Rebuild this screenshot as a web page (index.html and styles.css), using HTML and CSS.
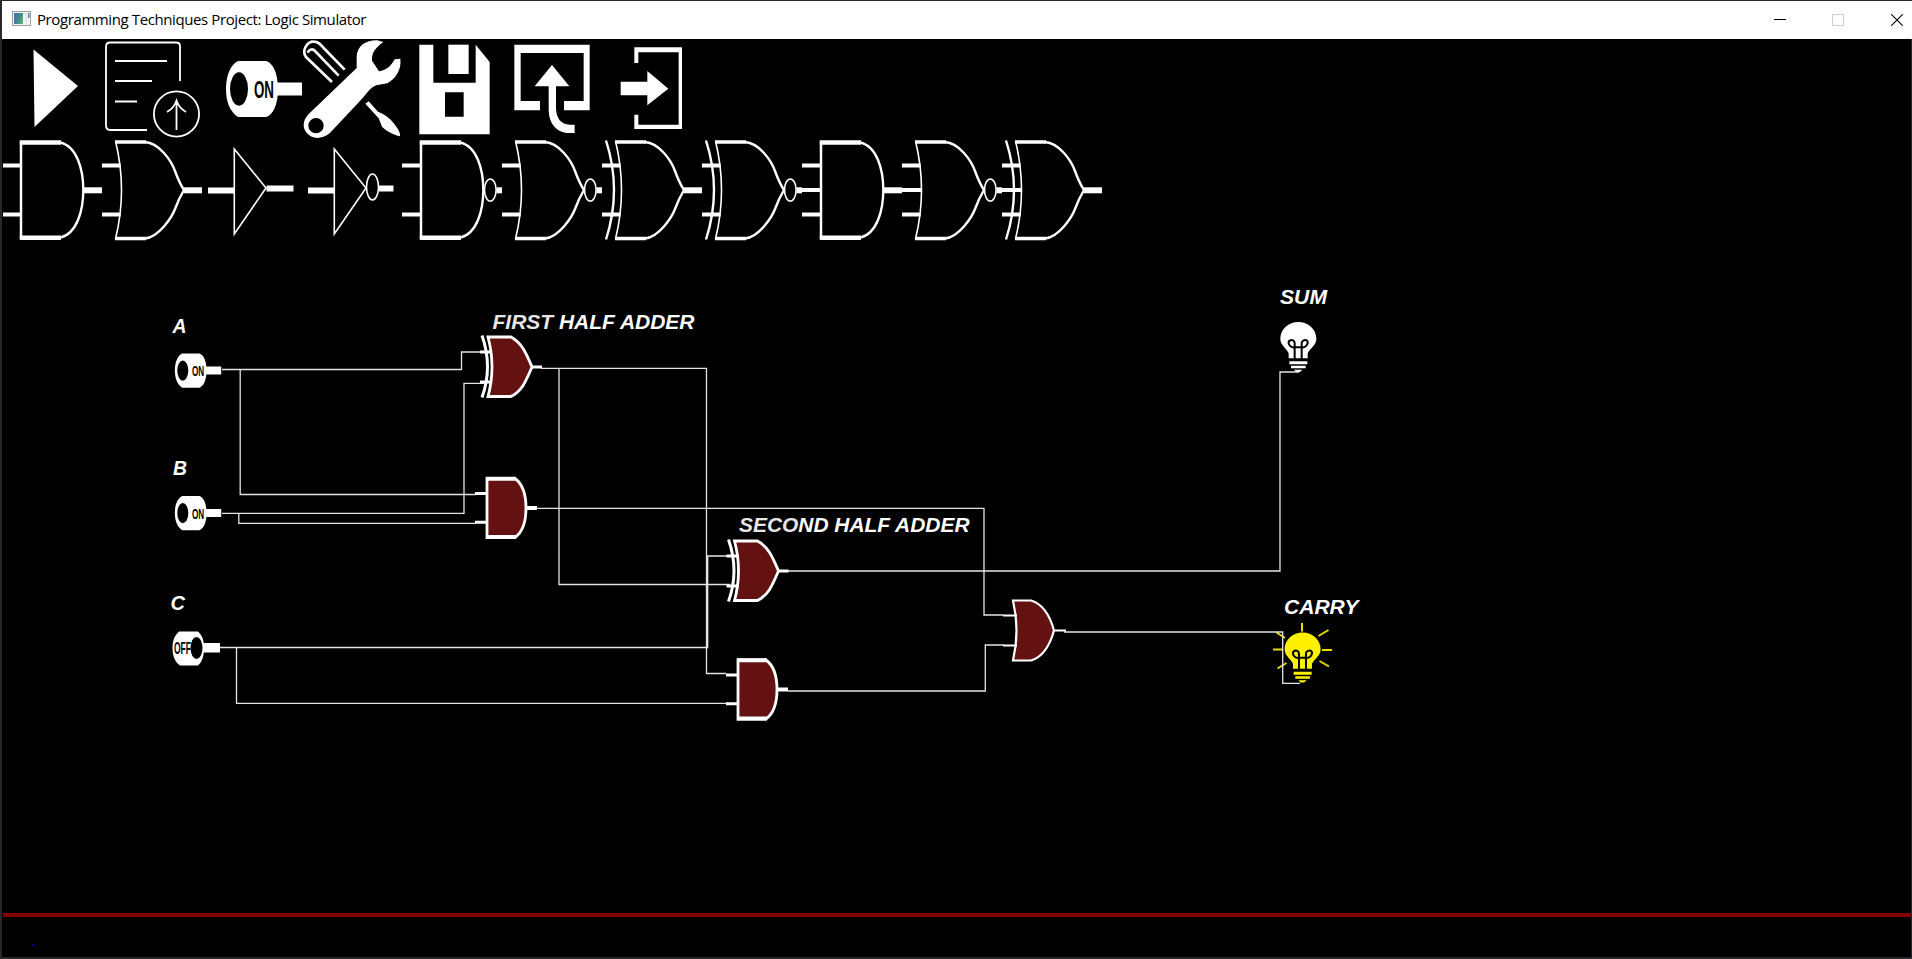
FILE: index.html
```html
<!DOCTYPE html>
<html lang="en">
<head>
<meta charset="utf-8">
<title>Programming Techniques Project: Logic Simulator</title>
<link rel="stylesheet" href="styles.css">
</head>
<body>
<svg class="defs" aria-hidden="true">
  <defs>
    <g id="and-body"><path class="mid" d="M58 2.400C75 6 81.300 30 81.300 50S75 94 58 97.600"/><path class="thick" d="M17.800 2.500H59M17.800 97.700H59"/><path class="thin" d="M19 1V99"/></g>
    <g id="or-body"><path class="mid" d="M43 2C57 3 69 20 73 31S80 47 82 50C79 55 76 61 73 69S57 97 43 98.500"/><path class="top" d="M13 2H44M13 98.500H44"/><path class="hair" d="M13.500 1Q25.500 50 13.500 99"/></g>
    <path id="xor-arc" class="mid" d="M4 .5Q20 50 4 99.500"/>
    <path id="in-and" class="pin" d="M0 25.500H18M0 74.500H18"/>
    <path id="in-or" class="pin" d="M0 25.500H18.500M0 74.500H18.500"/>
    <path id="out" class="lead" d="M82 50.300H100"/>
    <g id="bubble"><ellipse class="hair" cx="88.300" cy="50" rx="5.800" ry="11"/><path class="lead" d="M94.500 50.300H100"/></g>
    <g id="switch-on">
      <path class="solid" d="M238 61H266C273 63 278 73 278 89S273 115 266 117H238C230 112 226 102 226 89S230 65 238 61ZM277 82.500H302V95.500H277Z"/>
      <ellipse cx="239" cy="89" rx="9" ry="16.700"/>
      <text class="cap" x="254" y="98" font-size="24" textLength="20" lengthAdjust="spacingAndGlyphs">ON</text>
    </g>
    <g id="mini-xor">
      <path class="gate" d="M488 337H511C522 343 526 353 532 367C526 381 522 391 511 396.500H488Q496 367 488 337Z"/>
      <path class="mini" d="M482 335.500Q493 367 482 397.500M480 352H492M480 382H492M531 367H542"/>
    </g>
    <g id="mini-and">
      <path class="gate" d="M487 478.500H515C524 485 526 497 526 508S524 531 515 537.500H487Z"/>
      <path class="mini" d="M475 493.500H487M475 522.300H487"/><path class="base" d="M486 478.800H516M486 537H516"/><path class="base" d="M527 508H537"/>
    </g>
    <g id="bulb">
      <path class="glass" d="M116 265V250C108 232 91 226 91 206C91 177 116 156 145 156S199 177 199 206C199 226 182 232 173 250V265Z"/>
      <path class="glass" d="M118 274H172V283H118ZM123 287H167V295H123ZM132 299H157L150 306H139Z"/>
      <path class="filament" d="M134 270V232C118 234 112 217 119 212S134 213 134 219V232H155V219C155 213 166 207 171 212S171 234 155 232V270M134 245V270"/>
    </g>
  </defs>
</svg>

<div class="window">
  <header class="titlebar">
    <svg class="app-icon" viewBox="0 0 19 15"><rect x=".5" y=".5" width="18" height="14" fill="#f3f5f5" stroke="#9a9fa2"/><rect x="2" y="2" width="9" height="11" fill="#458b92"/><path d="M2 2H7L3 13H2Z" fill="#4879a5"/><path d="M11 2V13L7 13Z" fill="#59a773"/><rect x="13" y="2" width="2" height="11" fill="#e2e6e8"/><rect x="16" y="2" width="1.500" height="5" fill="#5886b2"/></svg>
    <h1 class="title">Programming Techniques Project: Logic Simulator</h1>
    <div class="controls">
      <svg viewBox="0 0 12 12"><path d="M0 5.500H12" stroke="#000"/></svg>
      <svg viewBox="0 0 12 12"><path d="M.5.500H11.500V11.500H.5Z" stroke="#ccc" fill="none"/></svg>
      <svg class="close" viewBox="0 0 12 12"><path d="M.3.300L11.700 11.700M11.700.300L.3 11.700" stroke="#000" stroke-width="1.100"/></svg>
    </div>
  </header>

  <nav class="row">
    <svg viewBox="2 40 100 100"><path class="solid" d="M33.500 49.500L78 86L34.500 127Z"/></svg>
    <svg viewBox="102 40 100 100"><g class="outline"><path d="M180 81V46Q180 42.500 176 42.500H110Q106 42.500 106 47V125Q106 130 110 130H147M115 61H167M115 81H152M115 101.500H137"/><circle cx="176.500" cy="114" r="22.600"/><path d="M176.500 130V101M167 112Q174 108 176.500 100.500Q179 108 186 112"/></g></svg>
    <svg viewBox="202 40 100 100"><use href="#switch-on"/></svg>
    <svg viewBox="302 40 100 100"><g transform="translate(290 30) scale(.33333)">
      <path class="solid" fill-rule="evenodd" d="M200 114V78C203 45 230 30 262 31L280 36C261 51 244 65 246 92L267 124C288 121 301 111 314 88L331 86C335 118 318 145 292 160L259 166C241 173 230 190 219 203L119 310C94 329 65 329 48 306C34 286 43 263 60 248ZM55 287A23 23 0 1 0 101 287A23 23 0 1 0 55 287Z"/>
      <path class="handle" d="M126 156L48 81C34 62 51 34 72 35C86 35 93 45 104 57L164 119M146 137L77 65C69 53 57 59 53 68"/>
      <path class="solid" d="M226 221L236 214L264 245C282 251 303 267 313 282C324 296 332 309 330 319C310 314 288 303 276 290L266 265Z"/>
    </g></svg>
    <svg viewBox="402 40 100 100"><g transform="translate(290 30) scale(.33333)" class="solid"><path fill-rule="evenodd" d="M388 44H430V158H557V44L599 96V313H388ZM465 187V260H521V187Z"/><path d="M475 44H536V132H475Z"/></g></svg>
    <svg viewBox="502 40 100 100"><g transform="translate(290 30) scale(.33333)" class="solid"><path d="M673 44H899V241H822V213H881V69H692V213H750V241H673Z"/><path d="M786 105L838 169H798V235C799 265 813 284 840 284H854V309H829C796 304 776 277 776 240V169H734Z"/></g></svg>
    <svg viewBox="602 40 100 100"><g transform="translate(290 30) scale(.33333)" class="solid"><path d="M1033 52H1176V297H1033V254H1045V284H1166V67H1045V99H1033Z"/><path d="M992 155H1072V123L1135 176L1072 226V196H992Z"/></g></svg>
  </nav>

  <nav class="row">
    <svg viewBox="0 0 100 100"><path class="pin" d="M1 25.500H18M1 74.500H18"/><use href="#and-body"/><use href="#out"/></svg>
    <svg viewBox="0 0 100 100"><use href="#in-or"/><use href="#or-body"/><use href="#out"/></svg>
    <svg viewBox="0 0 100 100"><path class="lead" d="M6 50.500H32M64.500 48.500H91.500"/><path class="hair" d="M32.300 9V94L64 48Z"/></svg>
    <svg viewBox="0 0 100 100"><path class="lead" d="M6 50.500H32M77 48.500H91.500"/><path class="hair" d="M32.300 9V94L64 48Z"/><ellipse class="hair" cx="70.500" cy="47" rx="6" ry="13"/></svg>
    <svg viewBox="0 0 100 100"><use href="#in-and"/><use href="#and-body"/><use href="#bubble"/></svg>
    <svg viewBox="0 0 100 100"><use href="#in-or"/><use href="#or-body"/><use href="#bubble"/></svg>
    <svg viewBox="0 0 100 100"><use href="#in-or"/><use href="#xor-arc"/><use href="#or-body"/><use href="#out"/></svg>
    <svg viewBox="0 0 100 100"><use href="#in-or"/><use href="#xor-arc"/><use href="#or-body"/><use href="#bubble"/></svg>
    <svg viewBox="0 0 100 100"><use href="#in-and"/><path class="pin" d="M0 50H18"/><use href="#and-body"/><use href="#out"/></svg>
    <svg viewBox="0 0 100 100"><use href="#in-or"/><path class="pin" d="M0 50H20"/><use href="#or-body"/><use href="#bubble"/></svg>
    <svg viewBox="0 0 100 100"><use href="#in-or"/><path class="pin" d="M0 50H20"/><use href="#xor-arc"/><use href="#or-body"/><use href="#out"/></svg>
  </nav>

  <main class="workspace">
    <svg class="circuit" viewBox="2 240 1909 673">
      <g transform="translate(37 316.300) scale(.61)"><use href="#switch-on"/></g>
      <g transform="translate(37 458.800) scale(.61)"><use href="#switch-on"/></g>
      <path class="solid" d="M179 631.500H198C202 635 204 640 204 648S202 662 198 665.500H180C175 662 172.500 656 172.500 648S175 635 179 631.500ZM203 643H220V652.500H203Z"/>
      <ellipse cx="196.500" cy="648" rx="6" ry="11"/>
      <text class="cap" x="174" y="654" font-size="17" textLength="17" lengthAdjust="spacingAndGlyphs">OFF</text>

      <g class="lamp-off" transform="translate(1250 270) scale(.33333)"><use href="#bulb"/></g>
      <g class="lamp-on" transform="translate(1254.300 580.500) scale(.33333)"><use href="#bulb"/></g>
      <path class="ray" d="M1302 623V631.500M1318.500 636L1328.500 630M1322 650H1332M1319.500 661L1329 666.500M1276.500 632.500L1285 638M1273 649.500H1282.500M1277.500 668.500L1286.500 663"/>

      <path class="wire" d="M222 369.500H461.500V352H484M240.200 370V494.500H476M222 513.300H464V383.300H484M238.800 513.500V523.300H476M541 368.300H706.500V673.500H726M559 368.500V584.500H730M536 508.300H984V615H1003M220 647.500H707.700V556H728M236.500 648V703.300H728M788 571H1280V372H1299M788 691H985.300V645H1004M1064 632H1282.700V683.300H1300"/>

      <use href="#mini-xor"/>
      <use href="#mini-and"/>
      <use href="#mini-xor" x="246.500" y="204"/>
      <use href="#mini-and" x="251" y="181.500"/>
      <path class="gate gate-or" d="M1013 600.500H1031C1043 604 1050 616 1054 630.500C1050 645 1043 657 1031 660.500H1013Q1020 630.500 1013 600.500Z"/>
      <path class="mini gate-or" d="M1003 615.500H1017M1003 645.500H1017M1054 630.500H1066"/>

      <g class="labels">
        <text x="172.500" y="332.500" textLength="14" lengthAdjust="spacingAndGlyphs">A</text>
        <text x="173" y="475" textLength="14" lengthAdjust="spacingAndGlyphs">B</text>
        <text x="170.500" y="610" textLength="14.500" lengthAdjust="spacingAndGlyphs">C</text>
        <text x="492.500" y="328.500" textLength="202" lengthAdjust="spacingAndGlyphs"><tspan class="soft">FIRST</tspan> HALF ADDER</text>
        <text x="739" y="532.300" textLength="230.500" lengthAdjust="spacingAndGlyphs"><tspan class="soft">SECO</tspan>ND HALF ADDER</text>
        <text x="1280" y="303.500" textLength="47" lengthAdjust="spacingAndGlyphs">SUM</text>
        <text x="1284" y="613.500" textLength="74.500" lengthAdjust="spacingAndGlyphs">CARRY</text>
      </g>
    </svg>
  </main>

  <footer class="status"><span class="cursor"></span></footer>
</div>
</body>
</html>
```
FILE: styles.css
```css
* { box-sizing: border-box; }
body { margin: 0; background: #000; overflow: hidden; }
.defs { position: absolute; width: 0; height: 0; }
.window {
  display: flex;
  flex-direction: column;
  height: 959px;
  border: solid #29292c;
  border-width: 1px 1px 2px 2px;
}
.titlebar {
  display: flex;
  align-items: center;
  height: 38px;
  margin-right: -1px;
  padding: 0 9px 0 10px;
  background: #fff;
}
.app-icon { width: 19px; height: 15px; margin-top: -3px; }
.title {
  margin: -2px auto 0 6px;
  font: 400 15px/20px "Open Sans", "Noto Sans", sans-serif;
  letter-spacing: -0.4px;
  color: #000;
}
.controls { display: flex; gap: 46px; }
.controls svg { width: 12px; height: 12px; }
.controls .close { margin-left: 1px; }
.row { display: flex; height: 100px; }
.row:first-of-type { height: 101px; padding-top: 1px; }
.row svg { width: 100px; height: 100px; flex: none; overflow: visible; }
.workspace { height: 673px; }
.circuit { display: block; width: 1909px; height: 673px; }
.status { flex: 1; margin-left: 1px; padding: 27px 0 0 29px; border-top: 4px solid #800000; }
.cursor { display: block; width: 2px; height: 2px; background: #0000a0; }

.solid { fill: #fff; }
.thick, .top, .mid, .thin, .hair, .pin, .lead, .outline, .handle, .mini, .base, .wire { fill: none; stroke: #fff; }
.thick { stroke-width: 4.5; }
.top { stroke-width: 3.5; }
.mid { stroke-width: 2.4; }
.thin { stroke-width: 2.5; }
.hair { stroke-width: 1.6; }
.pin { stroke-width: 4; }
.lead { stroke-width: 6; }
.outline { stroke-width: 1.8; }
.handle { stroke-width: 8; }
.gate { fill: #641112; stroke: #fff; stroke-width: 2.8; }
.mini { stroke-width: 3; }
.base { stroke-width: 4; }
.gate-or { stroke-width: 2.2; }
.wire { stroke: #e4e4e4; stroke-width: 1.3; }
.glass { fill: currentColor; }
.filament { fill: none; stroke: #000; stroke-width: 6; }
.lamp-off { color: #fff; }
.lamp-on { color: #fff000; }
.ray { stroke: #e8d900; stroke-width: 2; }
.cap { fill: #000; font-family: "Liberation Sans", sans-serif; font-weight: 700; }
.labels { fill: #fff; font: italic 700 21px "Liberation Sans", Arial, sans-serif; }
.soft { fill: #e6e6e6; }
```
